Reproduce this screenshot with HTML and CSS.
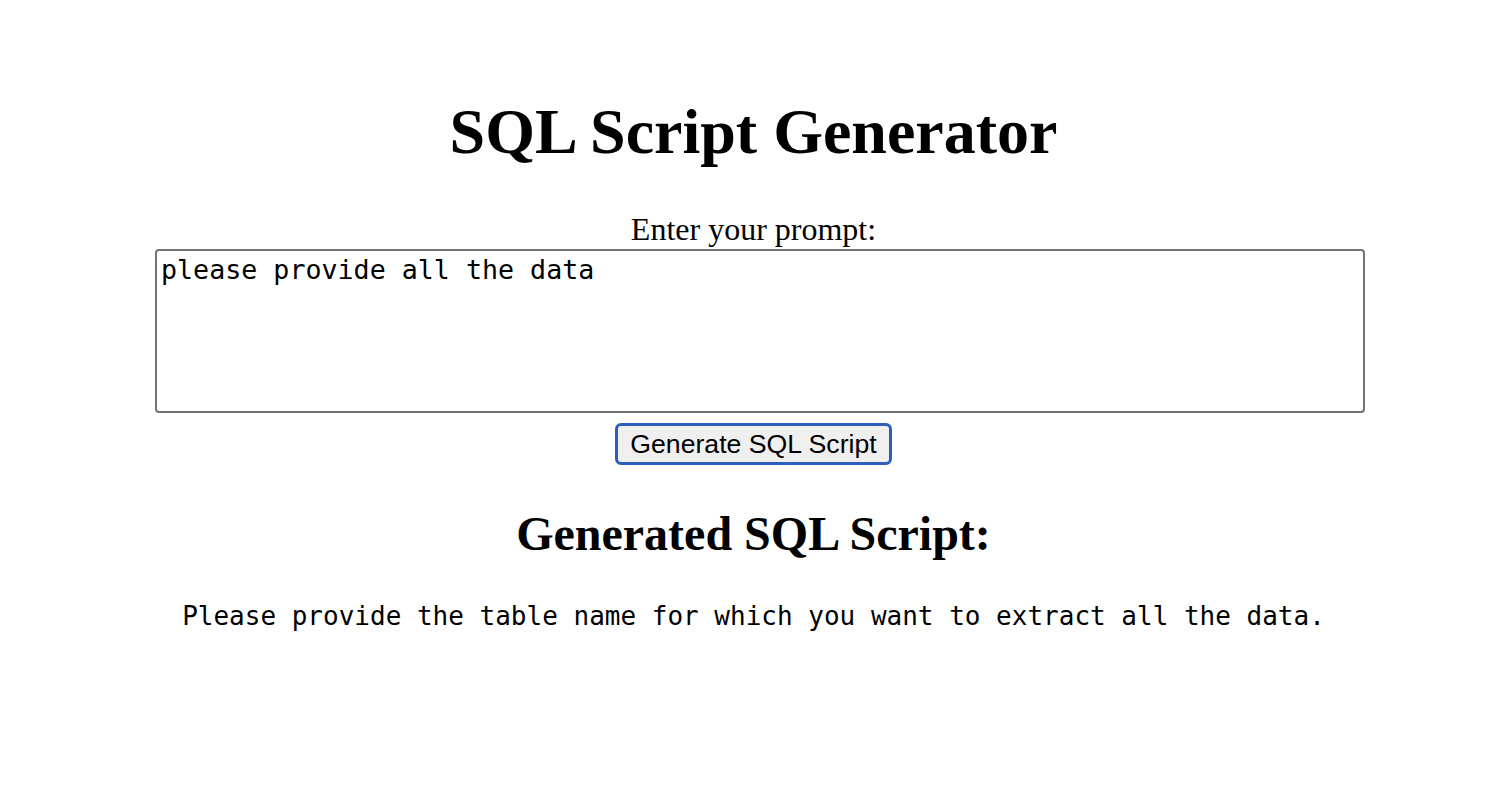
FILE: index.html
```html
<!DOCTYPE html>
<html>
<head>
<meta charset="utf-8">
<title>SQL Script Generator</title>
<link rel="stylesheet" href="styles.css">
</head>
<body>
<div class="page">
  <h1 class="title">SQL Script Generator</h1>
  <form class="prompt-form">
    <label class="prompt-label" for="prompt">Enter your prompt:</label>
    <textarea class="prompt-input" id="prompt">please provide all the data</textarea>
    <button class="generate-btn" type="button">Generate SQL Script</button>
  </form>
  <h2 class="result-title">Generated SQL Script:</h2>
  <pre class="result">Please provide the table name for which you want to extract all the data.</pre>
</div>
</body>
</html>
```

FILE: styles.css
```css
html, body {
  margin: 0;
  padding: 0;
  background: #ffffff;
  color: #000000;
}

.page {
  display: flex;
  flex-direction: column;
  align-items: center;
  padding: 95px 0 0 13px;
  font-family: "Liberation Serif", "Times New Roman", serif;
}

.title {
  margin: 0;
  font-size: 64px;
  line-height: 74px;
  font-weight: bold;
}

.prompt-form {
  display: flex;
  flex-direction: column;
  align-items: center;
  margin-top: 42px;
  width: 100%;
}

.prompt-label {
  font-size: 32px;
  line-height: 36px;
}

.prompt-input {
  box-sizing: border-box;
  margin: 2px 0 0 13px;
  width: 1210px;
  height: 164px;
  padding: 4px;
  border: 2px solid #727272;
  border-radius: 4px;
  font-family: "DejaVu Sans Mono", "Liberation Mono", monospace;
  font-size: 26.67px;
  line-height: 30px;
  color: #000;
  resize: none;
  background: #fff;
}

.generate-btn {
  box-sizing: border-box;
  margin-top: 10px;
  height: 42px;
  padding: 0 12px;
  border: 3px solid #2c5fbd;
  border-radius: 6px;
  background: #efefef;
  font-family: "Liberation Sans", Arial, sans-serif;
  font-size: 26.67px;
  line-height: 30px;
  color: #000;
}

.result-title {
  margin: 41px 0 0 0;
  font-size: 48px;
  line-height: 55px;
  font-weight: bold;
}

.result {
  margin: 40px 0 0 0;
  font-family: "DejaVu Sans Mono", "Liberation Mono", monospace;
  font-size: 26px;
  line-height: 30px;
  text-align: center;
}
```
